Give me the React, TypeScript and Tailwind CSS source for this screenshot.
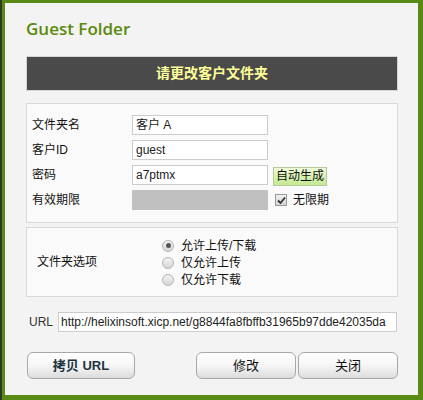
import React from 'react';

const font = { fontFamily: '"Liberation Sans", "Noto Sans CJK SC", sans-serif' };

// Plain field with a light gray border
const Field = ({ value }: { value: string }) => (
	<div className="w-[136px] h-[20px] border border-[#cccccc] bg-white pl-[3px] flex items-center text-[12px] text-[#222] overflow-hidden whitespace-nowrap">
		{value}
	</div>
);

const Radio = ({ checked = false, label }: { checked?: boolean; label: string }) => (
	<div className="flex items-center h-[17px]">
		<span className="w-[12px] h-[12px] rounded-full border border-[#b4b4b4] bg-gradient-to-b from-[#f4f4f4] to-[#d6d6d6] flex items-center justify-center">
			{checked && <span className="w-[5px] h-[5px] rounded-full bg-[#555]" />}
		</span>
		<span className="ml-[7px] text-[12px] text-[#111]">{label}</span>
	</div>
);

const Button = ({ children, className = '' }: { children: React.ReactNode; className?: string }) => (
	<div
		className={`h-[27px] rounded-[6px] border border-[#a8a8a8] bg-gradient-to-b from-white via-[#f6f6f6] to-[#dcdcdc] flex items-center justify-center text-[13px] ${className}`.trim()}
	>
		{children}
	</div>
);

export default function App() {
	return (
		<div className="w-[423px] h-[400px] bg-[#2f3a22] pl-[2px]" style={font}>
			<div className="h-full border-t-[3px] border-l-[3px] border-r-[5px] border-b-[5px] border-[#5a8a16] bg-[#f3f3f3] pl-[21px] pr-[20px] flex flex-col">
				{/* Title */}
				<h1
					className="mt-[16px] h-[20px] leading-[20px] text-[17px] font-semibold text-[#5a8a0c]"
					style={{ fontFamily: '"Open Sans", sans-serif' }}
				>
					Guest Folder
				</h1>

				{/* Header bar */}
				<div className="mt-[17px] h-[35px] border border-[#d4d4d4] bg-[#4a4a4a] flex items-center justify-center text-[14px] font-bold text-[#ffff99]">
					请更改客户文件夹
				</div>

				{/* Folder details */}
				<div className="mt-[12px] h-[120px] border border-[#d8d8d8] bg-[#fafafa] pt-[11px] pl-[5px] flex flex-col gap-[5px]">
					<div className="flex items-center h-[20px]">
						<span className="w-[100px] text-[12px] text-[#111]">文件夹名</span>
						<Field value="客户 A" />
					</div>
					<div className="flex items-center h-[20px]">
						<span className="w-[100px] text-[12px] text-[#111]">客户ID</span>
						<Field value="guest" />
					</div>
					<div className="flex items-center h-[20px]">
						<span className="w-[100px] text-[12px] text-[#111]">密码</span>
						<Field value="a7ptmx" />
						<div className="ml-[5px] mt-[2px] w-[54px] h-[19px] border border-[#b8c8a0] bg-gradient-to-b from-[#eefbd8] to-[#c4e88e] flex items-center justify-center text-[12px] text-[#111]">
							自动生成
						</div>
					</div>
					<div className="flex items-center h-[20px]">
						<span className="w-[100px] text-[12px] text-[#111]">有效期限</span>
						<div className="w-[136px] h-[20px] bg-[#c0c0c0]" />
						<span className="ml-[7px] w-[12px] h-[12px] border border-[#9a9a9a] bg-gradient-to-b from-[#f0f0f0] to-[#d4d4d4] flex items-center justify-center">
							<svg width="9" height="9" viewBox="0 0 9 9">
								<path d="M1 4.5 L3.5 7 L8 1.5" fill="none" stroke="#333" strokeWidth="1.8" />
							</svg>
						</span>
						<span className="ml-[6px] text-[12px] text-[#111]">无限期</span>
					</div>
				</div>

				{/* Folder options */}
				<div className="mt-[4px] h-[70px] border border-[#d8d8d8] bg-[#fafafa] pl-[10px] flex items-center">
					<span className="w-[125px] text-[12px] text-[#111]">文件夹选项</span>
					<div className="flex flex-col pt-[1px]">
						<Radio checked label="允许上传/下载" />
						<Radio label="仅允许上传" />
						<Radio label="仅允许下载" />
					</div>
				</div>

				{/* URL */}
				<div className="mt-[15px] h-[20px] flex items-center pl-[3px]">
					<span className="w-[29px] text-[12px] text-[#333]">URL</span>
					<div className="flex-1 mr-[1px] h-[20px] border border-[#cccccc] bg-white pl-[2px] flex items-center text-[12px] text-[#222] overflow-hidden whitespace-nowrap">
						http://helixinsoft.xicp.net/g8844fa8fbffb31965b97dde42035da
					</div>
				</div>

				{/* Actions */}
				<div className="mt-[20px] flex items-center justify-between">
					<Button className="ml-[1px] w-[108px] font-bold text-[#1c3442]">拷贝 URL</Button>
					<div className="flex gap-[2px]">
						<Button className="w-[100px] text-[#111]">修改</Button>
						<Button className="w-[100px] text-[#111]">关闭</Button>
					</div>
				</div>
			</div>
		</div>
	);
}
